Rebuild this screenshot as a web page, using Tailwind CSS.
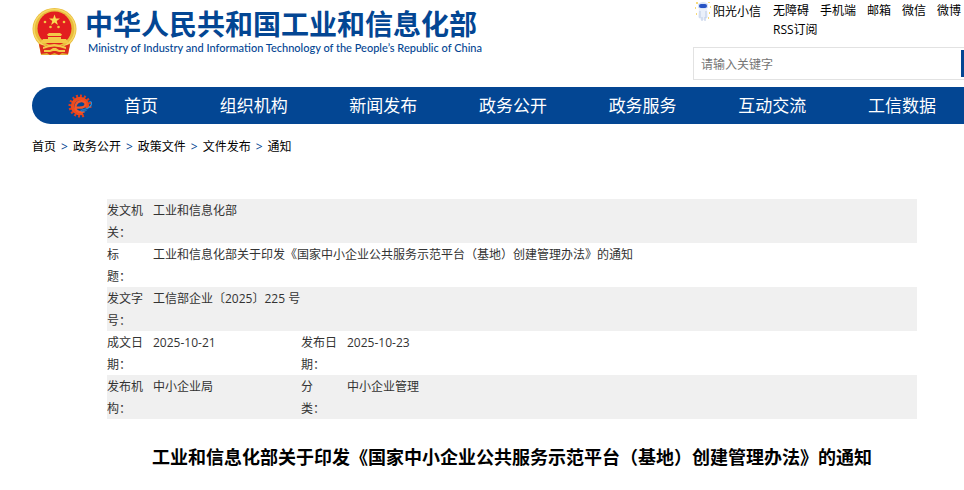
<!DOCTYPE html>
<html lang="zh-CN">
<head>
  <meta charset="UTF-8" />
  <meta name="viewport" content="width=device-width, initial-scale=1.0" />
  <title>中华人民共和国工业和信息化部</title>
  <script src="https://cdn.jsdelivr.net/npm/@tailwindcss/browser@4"></script>
</head>
<body class="bg-white text-black text-xs font-['Open_Sans','Noto_Sans_CJK_SC',sans-serif] overflow-x-hidden">

  <!-- Header -->
  <header class="flex justify-between pl-8 h-[87px]">
    <a href="#" class="flex items-start pt-2">
      <svg class="w-[45px] h-12" viewBox="0 0 45 48" aria-hidden="true">
        <path d="M6 32l3 15h27l3-15z" fill="#e2ae35" />
        <ellipse cx="22.5" cy="21" rx="22" ry="21" fill="#e9bd3c" />
        <ellipse cx="22.5" cy="21" rx="20.500" ry="19.500" fill="none" stroke="#f6d764" stroke-width="1.500" />
        <circle cx="22.5" cy="20.5" r="17" fill="#e21d1f" />
        <path d="M22.5 6.5l1.4 4h4.1l-3.3 2.500 1.200 4-3.400-2.400-3.400 2.400 1.200-4-3.300-2.500h4.100z" fill="#f9dc52" />
        <g fill="#f5c644">
          <circle cx="13" cy="14" r="1.300" />
          <circle cx="32" cy="14" r="1.300" />
          <circle cx="18.500" cy="19" r="1.300" />
          <circle cx="26.500" cy="19" r="1.300" />
        </g>
        <path d="M15 26.500l2-1.500h11l2 1.500-1 1.500h-13zM16 29h13v2h-13zM8 35l3-4h23l3 4z" fill="#f3c949" />
        <path d="M7 36l6 2 9.500-3 9.500 3 6-2-2 10-6-1-3 2-4.500-2-4.500 2-3-2-6 1z" fill="#dc2a1e" />
        <path d="M11 39q11-6 23 0v2q-12-5-23 0zM12 42h6l3-2h3l3 2h6v2h-6l-3-1h-3l-3 1h-6z" fill="#f3c949" />
      </svg>
      <div class="pl-2 text-[#034693]">
        <div class="text-[28px] leading-[33px] font-bold whitespace-nowrap">中华人民共和国工业和信息化部</div>
        <div class="pl-[3px] text-[11px] leading-[14px] font-medium font-['Lato',sans-serif] whitespace-nowrap">Ministry of Industry and Information Technology of the People’s Republic of China</div>
      </div>
    </a>

    <div class="w-[271px] shrink-0">
      <div class="flex h-[47px] pt-[2px] leading-[19px]">
        <a href="#" class="flex items-start w-20 shrink-0 whitespace-nowrap">
          <svg class="w-5 h-5" viewBox="0 0 20 20" aria-hidden="true">
            <path d="M6 7h8l1 8-3 3h-4l-3-3z" fill="#eaf0fa" />
            <path d="M7 9v7M13 9v7M9 15v4M12 15v4" stroke="#bccbe6" fill="none" />
            <path d="M5 2q5-4 10 0v4q-5 2-10 0z" fill="#d7e3f7" />
            <rect x="6" y="2" width="8" height="4" rx="2" fill="#2653c4" />
            <path d="M3 1h2M15 0h2M2 6h1M17 5h1M3 12h1M16 11h1M15 16h1" stroke="#f6cf4d" stroke-width="1.500" />
          </svg>
          <span>阳光小信</span>
        </a>
        <nav class="flex flex-wrap content-start gap-x-[11px] -mt-px">
          <a href="#">无障碍</a>
          <a href="#">手机端</a>
          <a href="#">邮箱</a>
          <a href="#">微信</a>
          <a href="#">微博</a>
          <a href="#">RSS订阅</a>
        </nav>
      </div>
      <form class="flex items-center h-[33px] border border-r-0 border-[#e2e2e2]">
        <input type="text" aria-label="请输入关键字" placeholder="请输入关键字" class="flex-1 min-w-0 h-full pt-px pl-[7px] outline-none placeholder:text-[#757575]" />
        <button type="button" aria-label="搜索" class="w-[3px] h-[27px] bg-[#034693]"></button>
      </form>
    </div>
  </header>

  <!-- Main nav -->
  <nav class="flex items-center ml-8 h-[37px] pl-9 pr-7 rounded-l-full bg-[#034693] text-white text-[17px] whitespace-nowrap">
    <svg class="w-6 h-6 mr-8 shrink-0" viewBox="0 0 24 24" aria-hidden="true">
      <circle cx="12" cy="12" r="10" fill="none" stroke="#dc3d20" stroke-width="3" stroke-dasharray="2 2" pathLength="64" />
      <circle cx="12" cy="12" r="7.500" fill="none" stroke="#ee4a1c" stroke-width="3.500" />
      <path d="M15 14h9v10h-6l-4-6z" fill="#034693" />
      <path d="M8 13.500q9 1 9.500-3c0-4-7-5-9.500 0-2.500 6 3 9 8.500 7" fill="none" stroke="#f4562a" stroke-width="2.200" />
      <path d="M18 7.500q6-1 5 2.500-2 5-11 5.500 9 1 11.500-4 2.500-6-5.500-4z" fill="#2f97dd" />
      <path d="M12 15.500q4 2 8 0-3 3-7 2z" fill="#2280cc" />
    </svg>
    <div class="flex flex-1 justify-between pt-0.5">
      <a href="#">首页</a>
      <a href="#">组织机构</a>
      <a href="#">新闻发布</a>
      <a href="#">政务公开</a>
      <a href="#">政务服务</a>
      <a href="#">互动交流</a>
      <a href="#">工信数据</a>
    </div>
  </nav>

  <!-- Breadcrumb -->
  <div class="flex items-center gap-[5px] pl-8 pt-[13px] leading-5">
    <a href="#">首页</a>
    <span class="text-[#034693]">&gt;</span>
    <a href="#">政务公开</a>
    <span class="text-[#034693]">&gt;</span>
    <a href="#">政策文件</a>
    <span class="text-[#034693]">&gt;</span>
    <a href="#">文件发布</a>
    <span class="text-[#034693]">&gt;</span>
    <a href="#">通知</a>
  </div>

  <!-- Document -->
  <main class="pl-[107px] pr-[47px] pt-[42px]">
    <table class="w-full table-fixed text-[#333] leading-[22px]">
      <colgroup>
        <col class="w-[46px]" />
        <col class="w-[148px]" />
        <col class="w-[46px]" />
        <col />
      </colgroup>
      <tbody class="align-top">
        <tr class="bg-[#f0f0f0]">
          <th scope="row" class="h-11 pt-px text-left font-normal"><div class="h-[43px]">发文机<br />关：</div></th>
          <td colspan="3" class="pt-px">工业和信息化部</td>
        </tr>
        <tr>
          <th scope="row" class="h-11 pt-px text-left font-normal"><div class="h-[43px]">标<br />题：</div></th>
          <td colspan="3" class="pt-px">工业和信息化部关于印发《国家中小企业公共服务示范平台（基地）创建管理办法》的通知</td>
        </tr>
        <tr class="bg-[#f0f0f0]">
          <th scope="row" class="h-11 pt-px text-left font-normal"><div class="h-[43px]">发文字<br />号：</div></th>
          <td colspan="3" class="pt-px">工信部企业〔2025〕225 号</td>
        </tr>
        <tr>
          <th scope="row" class="h-11 pt-px text-left font-normal"><div class="h-[43px]">成文日<br />期：</div></th>
          <td class="pt-px">2025-10-21</td>
          <th scope="row" class="pt-px text-left font-normal"><div class="h-[43px]">发布日<br />期：</div></th>
          <td class="pt-px">2025-10-23</td>
        </tr>
        <tr class="bg-[#f0f0f0]">
          <th scope="row" class="h-11 pt-px text-left font-normal"><div class="h-[43px]">发布机<br />构：</div></th>
          <td class="pt-px">中小企业局</td>
          <th scope="row" class="pt-px text-left font-normal"><div class="h-[43px]">分<br />类：</div></th>
          <td class="pt-px">中小企业管理</td>
        </tr>
      </tbody>
    </table>
    <h1 class="pt-6 text-lg leading-7 font-bold text-center">工业和信息化部关于印发《国家中小企业公共服务示范平台（基地）创建管理办法》的通知</h1>
  </main>

</body>
</html>
